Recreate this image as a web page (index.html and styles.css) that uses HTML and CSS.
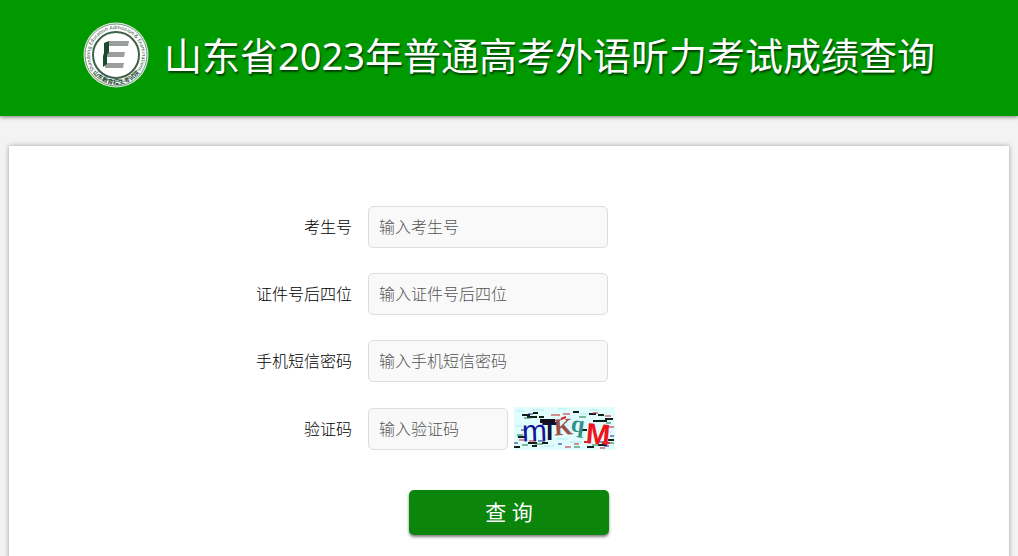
FILE: index.html
```html
<!DOCTYPE html>
<html lang="zh-CN">
<head>
    <meta charset="utf-8">
    <meta name="viewport" content="width=device-width, initial-scale=1">
    <title>山东省2023年普通高考外语听力考试成绩查询</title>
    <link rel="stylesheet" href="styles.css">
</head>
<body>
    <header class="header">
        <svg class="logo" viewBox="0 0 66 66" aria-hidden="true">
            <defs>
                <path id="ring-top" d="M11 47 A26 26 0 1 1 55 47"/>
                <path id="ring-bottom" d="M5 42 A29.400 29.400 0 0 0 61 42"/>
            </defs>
            <circle cx="33" cy="33" r="32.500" fill="#dfe9df"/>
            <circle cx="33" cy="33" r="31" fill="#fff" stroke="#7f9a86" stroke-width="1"/>
            <circle cx="33" cy="33" r="23" fill="#fff" stroke="#3c6148" stroke-width="2"/>
            <text class="ring-en"><textPath href="#ring-top" startOffset="50%" text-anchor="middle">Shandong Education Admission &amp; Examinations</textPath></text>
            <text class="ring-cn"><textPath href="#ring-bottom" startOffset="50%" text-anchor="middle">山东教育招生考试院</textPath></text>
            <path fill="#9a9f9c" d="M26 19h20l-1 5H25zM24 30h18l-1 5H24zM22 41h19l-1 5H22z"/>
            <path fill="#174d2b" d="M21 21l5-2v11l-2 3v9l-4 3V34l1-3z"/>
        </svg>
        <h1 class="title">山东省2023年普通高考外语听力考试成绩查询</h1>
    </header>

    <main class="container">
        <form class="query-form">
            <div class="row">
                <label class="label" for="ksh">考生号</label>
                <input class="input" id="ksh" type="text" placeholder="输入考生号">
            </div>
            <div class="row">
                <label class="label" for="zjh">证件号后四位</label>
                <input class="input" id="zjh" type="text" placeholder="输入证件号后四位">
            </div>
            <div class="row">
                <label class="label" for="mm">手机短信密码</label>
                <input class="input" id="mm" type="password" placeholder="输入手机短信密码">
            </div>
            <div class="row">
                <label class="label" for="yzm">验证码</label>
                <input class="input input-code" id="yzm" type="text" placeholder="输入验证码">
                <svg class="captcha" viewBox="0 0 101 43" role="img" aria-label="验证码">
                    <rect width="101" height="43" fill="#e0fcfc"/>
                    <path stroke="#c4f4f6" stroke-width="2" d="M3 4h8M18 3h12M44 2h9M66 7h12M85 13h10M2 19h6M56 35h12M30 39h10M76 3h8M42 32h12M2 29h5M90 25h8"/>
                    <path stroke="#102018" stroke-width="2" d="M8 8h8M13 10h10M19 6h5M59 5h6M75 7h7M84 8h6M4 30h7M14 36h9M0 40h6M18 39h5M28 36h6M73 40h7M84 38h9M94 33h6M66 23h7M25 10h5M91 12h8M79 14h14"/>
                    <path stroke="#c02028" stroke-width="1" d="M37 8h9M49 7h7M79 6h5M91 9h6M5 33h5M15 34h7M60 37h5M51 40h6M86 41h5M94 20h6"/>
                    <path stroke="#19743a" stroke-width="1" d="M10 11h7M65 10h7M3 28h6M21 37h8M8 38h6M78 38h7M95 36h5M92 16h5M60 40h6"/>
                    <path stroke="#1b218c" stroke-width="1" d="M14 7h5M7 23h4M24 34h7M84 35h8M96 29h4M44 37h4M0 36h4M90 39h5"/>
                    <g class="captcha-text">
                        <text class="captcha-sans" x="8" y="34" font-size="30" font-weight="normal" fill="#10129a" transform="rotate(-2 20 25)">m</text>
                        <text class="captcha-sans" x="28" y="33" font-size="25" fill="#11103c">T</text>
                        <text x="40" y="28" font-size="24" fill="#9c5048" transform="rotate(-4 47 20)">K</text>
                        <text x="57" y="25" font-size="24" fill="#34908b" transform="rotate(8 64 20)">q</text>
                        <text class="captcha-sans" x="72" y="37" font-size="29" fill="#f0131b" transform="rotate(5 83 27)">M</text>
                    </g>
                    <path stroke="#11101c" stroke-width="4" d="M26 14h15"/>
                    <path stroke="#e2202a" stroke-width="2" d="M47 12l5-2M70 35h7M88 36h8"/>
                </svg>
            </div>
            <button class="submit-btn" type="submit">查 询</button>
        </form>
    </main>
</body>
</html>
```
FILE: styles.css
```css
* {
    box-sizing: border-box;
}

body {
    margin: 0;
    background-color: #f3f3f3;
    color: #000;
    font-family: "Noto Sans", "Noto Sans CJK SC", sans-serif;
    font-size: 16px;
}

.header {
    display: flex;
    justify-content: center;
    align-items: center;
    gap: 15px;
    min-height: 116px;
    padding: 12px 16px 18px;
    background-color: #090;
    box-shadow: 0 1px 4px rgba(0, 0, 0, 0.5);
}

.logo {
    flex: none;
    width: 66px;
    height: 66px;
}

.ring-en {
    font-size: 5px;
    fill: #234c31;
}

.ring-cn {
    font-size: 6px;
    font-weight: bold;
    fill: #234c31;
}

.title {
    margin: 0;
    color: #fff;
    font-size: 38px;
    font-weight: normal;
    line-height: 54px;
    text-shadow: 1px 2px 2px rgba(0, 0, 0, 0.6);
}

.container {
    max-width: 1000px;
    margin: 30px auto 0;
    padding: 60px 0;
    background-color: #fff;
    box-shadow: 0 0 5px rgba(0, 0, 0, 0.35);
}

.query-form {
    display: flex;
    flex-direction: column;
    gap: 25px;
}

.row {
    display: flex;
    align-items: flex-end;
}

.label {
    width: 35.9%;
    padding-right: 16px;
    line-height: 42px;
    text-align: right;
    font-weight: 300;
}

.input {
    width: 240px;
    height: 42px;
    padding: 0 10px;
    border: 1px solid #ddd;
    border-radius: 5px;
    background-color: #f9f9f9;
    font-family: inherit;
    font-size: 16px;
    font-weight: 300;
}

.input::placeholder {
    color: #555;
}

.input-code {
    width: 140px;
    margin-right: 6px;
}

.captcha {
    width: 101px;
    height: 43px;
    cursor: pointer;
}

.captcha-text {
    font-family: "Liberation Serif", serif;
    font-weight: bold;
}

.captcha-sans {
    font-family: "Liberation Sans", sans-serif;
}

.submit-btn {
    align-self: center;
    width: 200px;
    height: 45px;
    margin-top: 15px;
    padding: 0 0 3px;
    border: 0;
    border-radius: 5px;
    background-color: #0b850b;
    box-shadow: 0 2px 3px rgba(0, 0, 0, 0.5);
    color: #fff;
    font-family: inherit;
    font-size: 21px;
    cursor: pointer;
}

.submit-btn:hover {
    background-color: #090;
}
```
